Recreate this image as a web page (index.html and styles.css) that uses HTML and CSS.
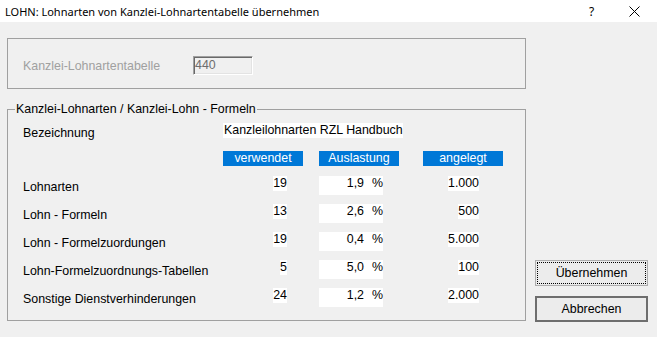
FILE: index.html
```html
<!DOCTYPE html>
<html lang="de">
<head>
  <meta charset="UTF-8" />
  <title>LOHN: Lohnarten von Kanzlei-Lohnartentabelle übernehmen</title>
  <link rel="stylesheet" href="styles.css">
</head>
<body>

  <div class="titlebar">
    <span class="title">LOHN: Lohnarten von Kanzlei-Lohnartentabelle übernehmen</span>
    <span class="help">?</span>
    <span class="close">
      <svg width="11" height="11" viewBox="0 0 11 11"><path d="M0.5 0.5 L10.5 10.5 M10.5 0.5 L0.5 10.5" stroke="#000" stroke-width="1" fill="none"/></svg>
    </span>
  </div>

  <div class="content">
    <div class="main">
      <div class="source-box">
        <span class="disabled-label">Kanzlei-Lohnartentabelle</span>
        <span class="textbox">440</span>
      </div>

      <fieldset class="group">
        <legend>Kanzlei-Lohnarten / Kanzlei-Lohn - Formeln</legend>
        <div class="grid">
          <div class="label first">Bezeichnung</div>
          <div class="name-field">Kanzleilohnarten RZL Handbuch</div>

          <div></div>
          <div class="head">verwendet</div>
          <div class="head">Auslastung</div>
          <div class="head">angelegt</div>

          <div class="label">Lohnarten</div>
          <div class="used"><span>19</span></div>
          <div class="pct"><span class="num">1,9</span><span class="unit">%</span></div>
          <div class="max"><span>1.000</span></div>

          <div class="label">Lohn - Formeln</div>
          <div class="used"><span>13</span></div>
          <div class="pct"><span class="num">2,6</span><span class="unit">%</span></div>
          <div class="max"><span>500</span></div>

          <div class="label">Lohn - Formelzuordungen</div>
          <div class="used"><span>19</span></div>
          <div class="pct"><span class="num">0,4</span><span class="unit">%</span></div>
          <div class="max"><span>5.000</span></div>

          <div class="label">Lohn-Formelzuordnungs-Tabellen</div>
          <div class="used"><span>5</span></div>
          <div class="pct"><span class="num">5,0</span><span class="unit">%</span></div>
          <div class="max"><span>100</span></div>

          <div class="label">Sonstige Dienstverhinderungen</div>
          <div class="used"><span>24</span></div>
          <div class="pct"><span class="num">1,2</span><span class="unit">%</span></div>
          <div class="max"><span>2.000</span></div>
        </div>
      </fieldset>
    </div>

    <div class="buttons">
      <button class="btn focused">Übernehmen</button>
      <button class="btn cancel">Abbrechen</button>
    </div>
  </div>

</body>
</html>
```

FILE: styles.css
```css
html, body {
  margin: 0;
  padding: 0;
}
body {
  width: 657px;
  height: 337px;
  overflow: hidden;
  background-color: #f0f0f0;
  font-family: "Liberation Sans", Arial, sans-serif;
  font-size: 12.4px;
  color: #000;
}
.titlebar {
  height: 22px;
  background-color: #fff;
  display: flex;
  align-items: center;
  font-family: "Noto Sans", sans-serif;
  font-size: 11px;
}
.title {
  margin-left: 5px;
  flex-grow: 1;
}
.help {
  width: 45px;
  margin-right: -2px;
  text-align: center;
  font-size: 12px;
}
.close {
  width: 45px;
  display: flex;
  justify-content: center;
}
.content {
  display: flex;
  padding-left: 7px;
}
.main {
  width: 519px;
}
.source-box {
  margin-top: 16px;
  height: 49px;
  border: 1px solid #a0a0a0;
  display: flex;
  align-items: center;
  padding-left: 15px;
}
.disabled-label {
  width: 170px;
  padding-top: 4px;
  color: #a0a0a0;
}
.textbox {
  width: 57px;
  height: 17px;
  line-height: 17px;
  padding-left: 1px;
  margin-top: 4px;
  border: 1px solid;
  border-color: #a0a0a0 #fff #fff #a0a0a0;
  box-shadow: inset 1px 1px #696969, inset -1px -1px #e3e3e3;
  color: #6d6d6d;
}
.group {
  margin: 13px 0 0 0;
  padding: 0 0 4px 15px;
  border: 1px solid #a0a0a0;
  min-inline-size: 0;
}
.group legend {
  margin-left: -8px;
  padding: 0 1px;
  line-height: 14px;
}
.grid {
  display: grid;
  grid-template-columns: 200px 96px 104px 80px;
  grid-template-rows: 28px 25px repeat(5, 28px);
  padding-top: 7px;
}
.label {
  padding-top: 4px;
  line-height: 15px;
}
.label.first {
  padding-top: 3px;
}
.name-field {
  grid-column: 2 / 5;
  width: 179px;
  height: 15px;
  line-height: 15px;
  padding-left: 1px;
  background-color: #fff;
}
.head {
  width: 80px;
  height: 15px;
  line-height: 15px;
  background-color: #0078d7;
  color: #fff;
  text-align: center;
}
.used {
  width: 64px;
  text-align: right;
  line-height: 15px;
}
.used span, .max span {
  background-color: #fff;
  display: inline-block;
}
.pct {
  display: flex;
  width: 64px;
  height: 19px;
  line-height: 15px;
  background-color: #fff;
}
.pct .num {
  width: 46px;
  text-align: right;
}
.pct .unit {
  margin-left: 8px;
}
.max {
  width: 56px;
  text-align: right;
  line-height: 15px;
}
.buttons {
  display: flex;
  flex-direction: column;
  justify-content: flex-end;
  gap: 10px;
  margin-left: 9px;
  margin-bottom: -1px;
}
.btn {
  width: 113px;
  height: 26px;
  padding: 0;
  font-family: "Liberation Sans", Arial, sans-serif;
  font-size: 12.4px;
  color: #000;
  background-color: #ececec;
  border: 1px solid #adadad;
}
.btn.focused {
  outline: 1px dotted #000;
  outline-offset: -3px;
}
.btn.cancel {
  border: 2px solid #6e6e6e;
}
```
